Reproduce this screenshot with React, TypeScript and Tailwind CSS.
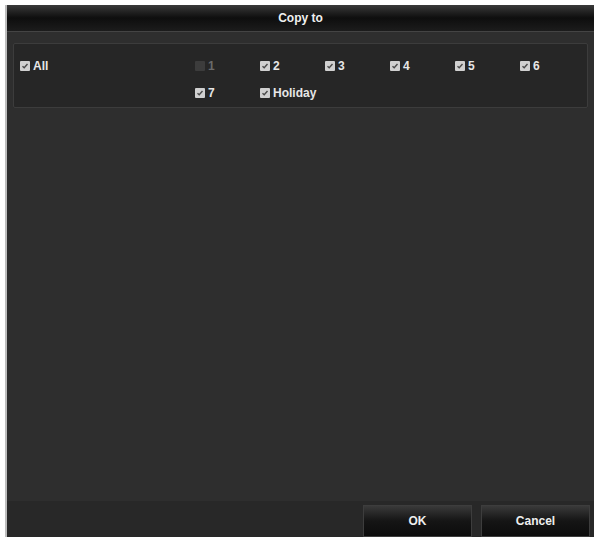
import React from 'react';

type Item = { label: string; checked: boolean; disabled?: boolean };

const row1: Item[] = [
  { label: '1', checked: false, disabled: true },
  { label: '2', checked: true },
  { label: '3', checked: true },
  { label: '4', checked: true },
  { label: '5', checked: true },
  { label: '6', checked: true },
];

const row2: Item[] = [
  { label: '7', checked: true },
  { label: 'Holiday', checked: true },
];

function Box({ checked, disabled }: { checked: boolean; disabled?: boolean }) {
  if (disabled) {
    return <span className="inline-block w-[10px] h-[10px] bg-[#3c3c3c] rounded-[1px]" />;
  }
  return (
    <span className="inline-flex items-center justify-center w-[10px] h-[10px] bg-[#d0d0d0] rounded-[1px]">
      {checked && (
        <svg width="8" height="8" viewBox="0 0 8 8">
          <path d="M1.5 4.2 L3.2 5.8 L6.5 2" stroke="#4a4a4a" strokeWidth="1.4" fill="none" />
        </svg>
      )}
    </span>
  );
}

function Check({ item }: { item: Item }) {
  return (
    <div className="flex items-center gap-[3px] w-[65px]">
      <Box checked={item.checked} disabled={item.disabled} />
      <span className={item.disabled ? 'text-[#6a6a6a]' : 'text-[#e6e6e6]'}>{item.label}</span>
    </div>
  );
}

export default function App() {
  return (
    <div className="w-[596px] h-[537px] bg-white pt-[5px] pl-[5px] pr-[2px] font-['Liberation_Sans',Arial,sans-serif] text-[12px] font-bold">
      <div className="h-full flex flex-col bg-[#2e2e2e] border-l-2 border-[#bdbdbd]">
        {/* title bar */}
        <div className="h-[27px] flex items-center justify-center text-[#f0f0f0] bg-gradient-to-b from-[#3a3a3a] via-[#0e0e0e] to-[#1c1c1c] border-b border-[#444]">
          Copy to
        </div>

        <div className="flex-1 px-[6px] pt-[11px]">
          <div className="h-[65px] bg-[#262626] border border-[#3c3c3c] rounded-[2px] pl-[6px] pt-[13px]">
            <div className="flex">
              <div className="w-[175px]">
                <Check item={{ label: 'All', checked: true }} />
              </div>
              {row1.map((it) => (
                <Check key={it.label} item={it} />
              ))}
            </div>
            <div className="flex mt-[9px] pl-[175px]">
              {row2.map((it) => (
                <Check key={it.label} item={it} />
              ))}
            </div>
          </div>
        </div>

        {/* footer */}
        <div className="h-[36px] bg-[#282828] flex justify-end items-end gap-[9px] pr-[4px]">
          <button className="w-[109px] h-[32px] text-[#eeeeee] font-bold bg-gradient-to-b from-[#3a3a3a] via-[#151515] to-[#0c0c0c] border border-[#3d3d3d]">
            OK
          </button>
          <button className="w-[109px] h-[32px] text-[#eeeeee] font-bold bg-gradient-to-b from-[#3a3a3a] via-[#151515] to-[#0c0c0c] border border-[#3d3d3d]">
            Cancel
          </button>
        </div>
      </div>
    </div>
  );
}
